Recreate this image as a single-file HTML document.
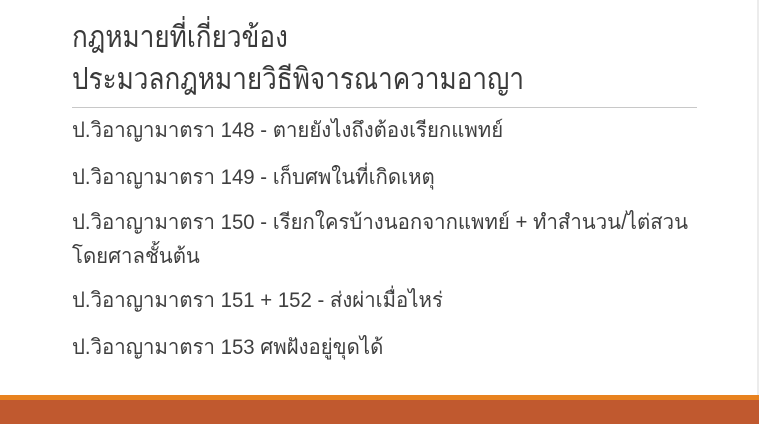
<!DOCTYPE html>
<html><head><meta charset="utf-8"><style>
html,body{margin:0;padding:0;width:759px;height:424px;overflow:hidden;background:#fff;}
body{position:relative;font-family:"Liberation Sans","DejaVu Sans",sans-serif;color:#404040;}
.t{position:absolute;left:72px;font-size:30px;line-height:36px;white-space:nowrap;color:#3a3a3a;transform:scaleX(0.87);transform-origin:0 0}
.l{position:absolute;left:72px;font-size:21px;line-height:30px;white-space:nowrap;color:#3f3f3f;transform:scaleX(0.97);transform-origin:0 0}
</style></head><body>
<div class="t" style="top:20px">กฎหมายที่เกี่ยวข้อง</div>
<div class="t" style="top:62px">ประมวลกฎหมายวิธีพิจารณาความอาญา</div>
<div style="position:absolute;left:72px;top:107px;width:625px;height:1px;background:#c8c8c8"></div>
<div class="l" style="top:116px">ป.วิอาญามาตรา 148 - ตายยังไงถึงต้องเรียกแพทย์</div>
<div class="l" style="top:163px">ป.วิอาญามาตรา 149 - เก็บศพในที่เกิดเหตุ</div>
<div class="l" style="top:208px">ป.วิอาญามาตรา 150 - เรียกใครบ้างนอกจากแพทย์ + ทำสำนวน/ไต่สวน</div>
<div class="l" style="top:242px">โดยศาลชั้นต้น</div>
<div class="l" style="top:286px">ป.วิอาญามาตรา 151 + 152 - ส่งผ่าเมื่อไหร่</div>
<div class="l" style="top:333px">ป.วิอาญามาตรา 153 ศพฝังอยู่ขุดได้</div>
<div style="position:absolute;right:0;top:0;width:2px;height:396px;background:#ececec"></div>
<div style="position:absolute;left:0;top:395px;width:759px;height:5px;background:#e8821f"></div>
<div style="position:absolute;left:0;top:400px;width:759px;height:24px;background:#c0592f"></div>
</body></html>
